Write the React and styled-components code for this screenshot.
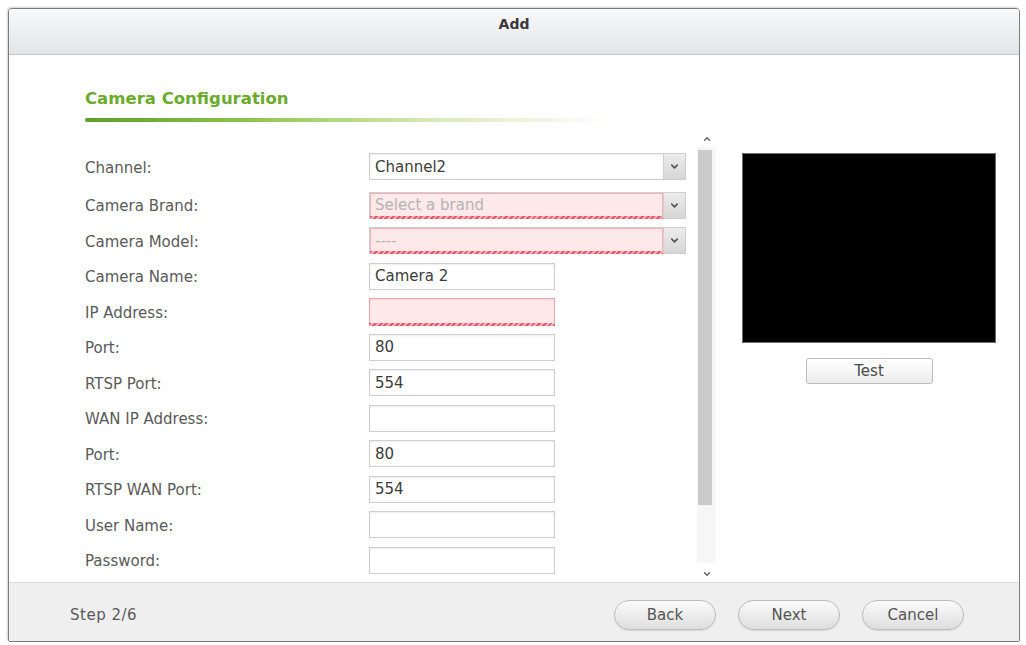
import styled, { createGlobalStyle } from 'styled-components'
import { ChevronDown, ChevronUp } from 'lucide-react'

const fields = [
	{ label: 'Channel:', kind: 'select', value: 'Channel2' },
	{ label: 'Camera Brand:', kind: 'select', placeholder: 'Select a brand', invalid: true },
	{ label: 'Camera Model:', kind: 'select', placeholder: '----', invalid: true },
	{ label: 'Camera Name:', value: 'Camera 2' },
	{ label: 'IP Address:', invalid: true },
	{ label: 'Port:', value: '80' },
	{ label: 'RTSP Port:', value: '554' },
	{ label: 'WAN IP Address:' },
	{ label: 'Port:', value: '80' },
	{ label: 'RTSP WAN Port:', value: '554' },
	{ label: 'User Name:' },
	{ label: 'Password:' },
]

const GlobalStyle = createGlobalStyle`
	html, body {
		margin: 0;
		padding: 0;
		background: #fff;
	}

	body {
		font-family: 'DejaVu Sans', Verdana, sans-serif;
		color: #555;
	}
`

export default function App() {
	return (
		<>
			<GlobalStyle />
			<Page>
				<Window>
					<TitleBar>Add</TitleBar>
					<Body>
						<Header>
							<h2>Camera Configuration</h2>
							<Underline />
						</Header>
						<Content>
							<FormArea>
								{fields.map((field, i) => (
									<Row key={i}>
										<Label>{field.label}</Label>
										{field.kind === 'select' ? (
											<Select>
												<Field $invalid={field.invalid} $placeholder={!field.value}>
													{field.value || field.placeholder}
												</Field>
												<Arrow>
													<ChevronDown size={11} strokeWidth={3.5} />
												</Arrow>
											</Select>
										) : (
											<Input $invalid={field.invalid}>{field.value}</Input>
										)}
									</Row>
								))}
							</FormArea>
							<Scrollbar>
								<ScrollArrow>
									<ChevronUp size={10} strokeWidth={3.5} />
								</ScrollArrow>
								<Track>
									<Thumb />
								</Track>
								<ScrollArrow>
									<ChevronDown size={10} strokeWidth={3.5} />
								</ScrollArrow>
							</Scrollbar>
							<Preview>
								<Screen />
								<TestButton>Test</TestButton>
							</Preview>
						</Content>
					</Body>
					<Footer>
						<Step>Step 2/6</Step>
						<PillButton>Back</PillButton>
						<PillButton>Next</PillButton>
						<PillButton>Cancel</PillButton>
					</Footer>
				</Window>
			</Page>
		</>
	)
}

const Page = styled.div`
	padding: 8px 0 0 8px;
	width: 1026px;
	height: 645px;
	box-sizing: border-box;
`

const Window = styled.div`
	display: flex;
	flex-direction: column;
	width: 1012px;
	height: 634px;
	box-sizing: border-box;
	border: 1px solid #7c7c7c;
	border-radius: 4px 4px 2px 2px;
	overflow: hidden;
	box-shadow: -1px -1px 2px rgba(0, 0, 0, 0.18);
	background: #fff;
`

const TitleBar = styled.div`
	display: flex;
	align-items: center;
	justify-content: center;
	height: 46px;
	flex-shrink: 0;
	border-bottom: 1px solid #c3c5c8;
	background: linear-gradient(#f8f9fa, #e2e4e7);
	font-size: 14px;
	font-weight: bold;
	color: #3a3a3a;
	padding-bottom: 16px;
	box-sizing: border-box;
`

const Body = styled.div`
	display: flex;
	flex-direction: column;
	flex: 1;
	min-height: 0;
	padding-left: 76px;
`

const Header = styled.div`
	padding-top: 34px;

	h2 {
		margin: 0;
		font-size: 16.5px;
		line-height: 20px;
		font-weight: bold;
		color: #6aab2c;
	}
`

const Underline = styled.div`
	margin-top: 9px;
	width: 525px;
	height: 4px;
	border-radius: 2px;
	background: linear-gradient(90deg, #5d9f2c 0%, #8cc24a 30%, #d7e9b4 65%, rgba(255, 255, 255, 0) 100%);
`

const Content = styled.div`
	display: flex;
	flex: 1;
	min-height: 0;
	margin-top: 8px;
`

const FormArea = styled.div`
	display: flex;
	flex-direction: column;
	gap: 8px;
	width: 612px;
	padding-top: 23px;
	overflow: hidden;
`

const Row = styled.div`
	display: flex;
	align-items: center;
	height: 27.5px;
	flex-shrink: 0;

	&:first-child {
		margin-bottom: 3px;
	}
`

const Label = styled.div`
	width: 284px;
	font-size: 15px;
	color: #5a5a5a;
	padding-top: 2px;
`

const Select = styled.div`
	display: flex;
	width: 317px;
	height: 27px;
	box-sizing: border-box;
	border: 1px solid #cfcfcf;
	background: #fff;
`

const Field = styled.div`
	position: relative;
	flex: 1;
	display: flex;
	align-items: center;
	padding-left: 5px;
	font-size: 15px;
	color: ${p => (p.$placeholder ? '#b4b4b4' : '#3c3c3c')};
	background: ${p => (p.$invalid ? '#fde8ea' : '#fff')};
	box-shadow: ${p => (p.$invalid ? 'inset 0 0 0 1px #f3b0b5' : 'inset 0 1px 2px rgba(0,0,0,0.08)')};

	&::after {
		content: '';
		display: ${p => (p.$invalid ? 'block' : 'none')};
		position: absolute;
		left: 0;
		right: 0;
		bottom: -1px;
		height: 3px;
		background: repeating-linear-gradient(135deg, #e9596a 0 2px, #f6aab2 2px 4px);
	}
`

const Arrow = styled.div`
	display: flex;
	align-items: center;
	justify-content: center;
	width: 21px;
	border-left: 1px solid #d0d0d0;
	background: linear-gradient(#ececec, #d6d6d6);
	color: #555;
`

const Input = styled.div`
	position: relative;
	display: flex;
	align-items: center;
	width: 186px;
	height: 27px;
	box-sizing: border-box;
	padding-left: 5px;
	border: 1px solid ${p => (p.$invalid ? '#f0a4aa' : '#cfcfcf')};
	background: ${p => (p.$invalid ? '#fde8ea' : '#fff')};
	box-shadow: inset 0 1px 2px rgba(0, 0, 0, 0.08);
	font-size: 15px;
	color: #3c3c3c;

	&::after {
		content: '';
		display: ${p => (p.$invalid ? 'block' : 'none')};
		position: absolute;
		left: -1px;
		right: -1px;
		bottom: -2px;
		height: 3px;
		background: repeating-linear-gradient(135deg, #e9596a 0 2px, #f6aab2 2px 4px);
	}
`

const Scrollbar = styled.div`
	display: flex;
	flex-direction: column;
	width: 19px;
	flex-shrink: 0;
`

const ScrollArrow = styled.div`
	display: flex;
	align-items: center;
	justify-content: center;
	height: 17px;
	color: #666;
`

const Track = styled.div`
	flex: 1;
	padding: 3px 4px 0 1px;
	background: #f6f6f6;
	margin-bottom: 2px;
`

const Thumb = styled.div`
	height: 355px;
	background: #cbcbcb;
`

const Preview = styled.div`
	display: flex;
	flex-direction: column;
	align-items: center;
	margin-left: 26px;
	padding-top: 23px;
`

const Screen = styled.div`
	width: 254px;
	height: 190px;
	box-sizing: border-box;
	border: 1px solid #6f6f6f;
	background: #000;
`

const TestButton = styled.div`
	display: flex;
	align-items: center;
	justify-content: center;
	margin-top: 15px;
	width: 127px;
	height: 26px;
	box-sizing: border-box;
	border: 1px solid #bdbdbd;
	border-radius: 3px;
	background: linear-gradient(#ffffff, #ececec);
	font-size: 15px;
	color: #4a4a4a;
`

const Footer = styled.div`
	display: flex;
	align-items: center;
	gap: 22px;
	height: 59px;
	flex-shrink: 0;
	box-sizing: border-box;
	padding: 6px 55px 0 61px;
	border-top: 1px solid #dadada;
	background: #efefef;
`

const Step = styled.div`
	flex: 1;
	font-size: 15px;
	letter-spacing: 0.5px;
	color: #5a5a5a;
`

const PillButton = styled.div`
	display: flex;
	align-items: center;
	justify-content: center;
	width: 102px;
	height: 30px;
	box-sizing: border-box;
	border: 1px solid #bcbcbc;
	border-radius: 15px;
	background: linear-gradient(#fbfbfb, #dedede);
	box-shadow: 0 1px 1px rgba(0, 0, 0, 0.1);
	font-size: 15px;
	color: #555;
`
